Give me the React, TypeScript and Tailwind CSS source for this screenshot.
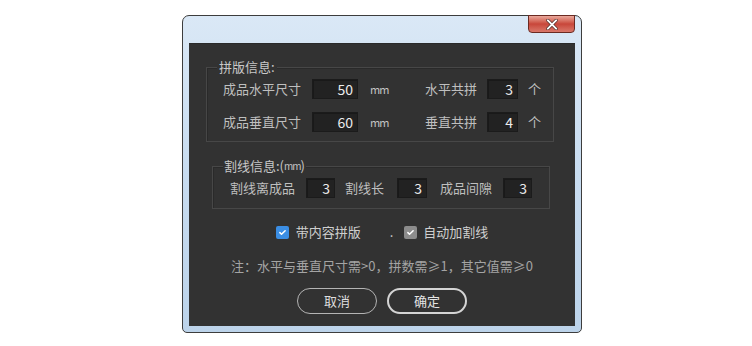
import React from "react";

const font = { fontFamily: '"Noto Sans CJK SC", "Noto Sans", sans-serif' };

function NumBox({ value, w }: { value: string; w: string }) {
  return (
    <div
      className={`${w} h-[20px] flex items-center justify-end pr-[4px] bg-[#222222] border border-[#1b1b1b] shadow-[inset_1px_1px_0_#191919] text-[14px] leading-none text-[#ececec]`}
    >
      {value}
    </div>
  );
}

function Check({ on }: { on: boolean }) {
  return (
    <span
      className={`w-[13px] h-[13px] rounded-[2px] flex items-center justify-center ${
        on ? "bg-[#3b8ee4]" : "bg-[#8c8c8c]"
      }`}
    >
      <svg viewBox="0 0 12 12" className="w-[9px] h-[9px]" fill="none" stroke="#ffffff" strokeWidth={2}>
        <path d="M2.5 6.2l2.2 2.2L9.5 3.6" strokeLinecap="round" strokeLinejoin="round" />
      </svg>
    </span>
  );
}

// unidad "㎜" escrita como mm comprimido (el glifo compuesto sale en otro color)
function Mm({ cls }: { cls: string }) {
  return <span className={`${cls} tracking-[-1px] text-[#c4c4c4]`}>mm</span>;
}

export default function App() {
  return (
    <div className="w-[752px] h-[346px] bg-white pt-[15px] pl-[182px]" style={font}>
      <div className="w-[400px] h-[318px] rounded-t-[7px] rounded-b-[5px] border border-[#3d3d3d] bg-gradient-to-b from-[#dae8f6] via-[#c8dcf0] to-[#bcd3ea] flex flex-col px-[6px] pb-[6px]">
        {/* barra de título: solo el botón cerrar */}
        <div className="h-[27px] flex justify-end">
          <div className="w-[47px] h-[18px] -mt-px rounded-b-[4px] border border-[#6b2a22] bg-gradient-to-b from-[#e9a89c] via-[#c8463a] to-[#d9776a] flex items-center justify-center">
            <svg viewBox="0 0 14 12" className="w-[14px] h-[11px]">
              <path d="M2.5 1.5l9 9M11.5 1.5l-9 9" stroke="#4a2a26" strokeWidth={3.6} strokeLinecap="round" />
              <path d="M2.5 1.5l9 9M11.5 1.5l-9 9" stroke="#ffffff" strokeWidth={2.2} strokeLinecap="round" />
            </svg>
          </div>
        </div>

        <div className="flex-1 bg-[#323232] border-t border-[#2a2a2a] flex flex-col text-[13px] text-[#bfbfbf]">
          {/* 拼版信息 */}
          <div className="relative mt-[23px] ml-[17px] w-[348px] h-[75px] border border-[#474747] shadow-[inset_1px_1px_0_#2a2a2a] flex flex-col gap-[13px] pt-[11px]">
            <span className="absolute -top-[10px] left-[10px] px-[2px] bg-[#323232] leading-[18px] text-[#c8c8c8]">
              拼版信息:
            </span>
            {[
              ["成品水平尺寸", "50", "水平共拼", "3"],
              ["成品垂直尺寸", "60", "垂直共拼", "4"],
            ].map(([a, v, b, n]) => (
              <div key={a} className="flex items-center h-[20px] pl-[16px]">
                <span className="w-[78px] whitespace-nowrap">{a}</span>
                <div className="ml-[11px]">
                  <NumBox value={v} w="w-[46px]" />
                </div>
                <Mm cls="ml-[12px] w-[13px] text-[11px]" />
                <span className="ml-[42px] w-[52px] whitespace-nowrap">{b}</span>
                <div className="ml-[10px]">
                  <NumBox value={n} w="w-[31px]" />
                </div>
                <span className="ml-[10px]">个</span>
              </div>
            ))}
          </div>

          {/* 割线信息 */}
          <div className="relative mt-[24px] ml-[23px] w-[338px] h-[43px] border border-[#474747] shadow-[inset_1px_1px_0_#2a2a2a] flex items-center pl-[17px] pt-[1px]">
            <span className="absolute -top-[10px] left-[10px] px-[1px] bg-[#323232] leading-[18px] text-[#c8c8c8] flex items-center">
              割线信息:(<Mm cls="text-[10px]" />)
            </span>
            <span className="w-[65px] whitespace-nowrap">割线离成品</span>
            <div className="ml-[11px]">
              <NumBox value="3" w="w-[29px]" />
            </div>
            <span className="ml-[10px] w-[42px] whitespace-nowrap">割线长</span>
            <div className="ml-[10px]">
              <NumBox value="3" w="w-[30px]" />
            </div>
            <span className="ml-[13px] w-[52px] whitespace-nowrap">成品间隙</span>
            <div className="ml-[11px]">
              <NumBox value="3" w="w-[29px]" />
            </div>
          </div>

          {/* opciones */}
          <div className="mt-[14px] h-[18px] flex items-center justify-center text-[#cfcfcf]">
            <Check on />
            <span className="ml-[7px]">带内容拼版</span>
            <span className="ml-[29px]">.</span>
            <span className="ml-[11px]">
              <Check on={false} />
            </span>
            <span className="ml-[6px]">自动加割线</span>
          </div>

          <p className="mt-[16px] text-center text-[13px] leading-[18px] text-[#a4a4a4] whitespace-nowrap">
            注：水平与垂直尺寸需&gt;0，拼数需≥1，其它值需≥0
          </p>

          <div className="mt-[13px] flex justify-center gap-[10px]">
            <button className="w-[80px] h-[26px] rounded-full border border-[#b4b4b4] text-[13px] text-[#dedede]">
              取消
            </button>
            <button className="w-[80px] h-[26px] rounded-full border-2 border-[#d4d4d4] text-[13px] text-[#e4e4e4]">
              确定
            </button>
          </div>
        </div>
      </div>
    </div>
  );
}
